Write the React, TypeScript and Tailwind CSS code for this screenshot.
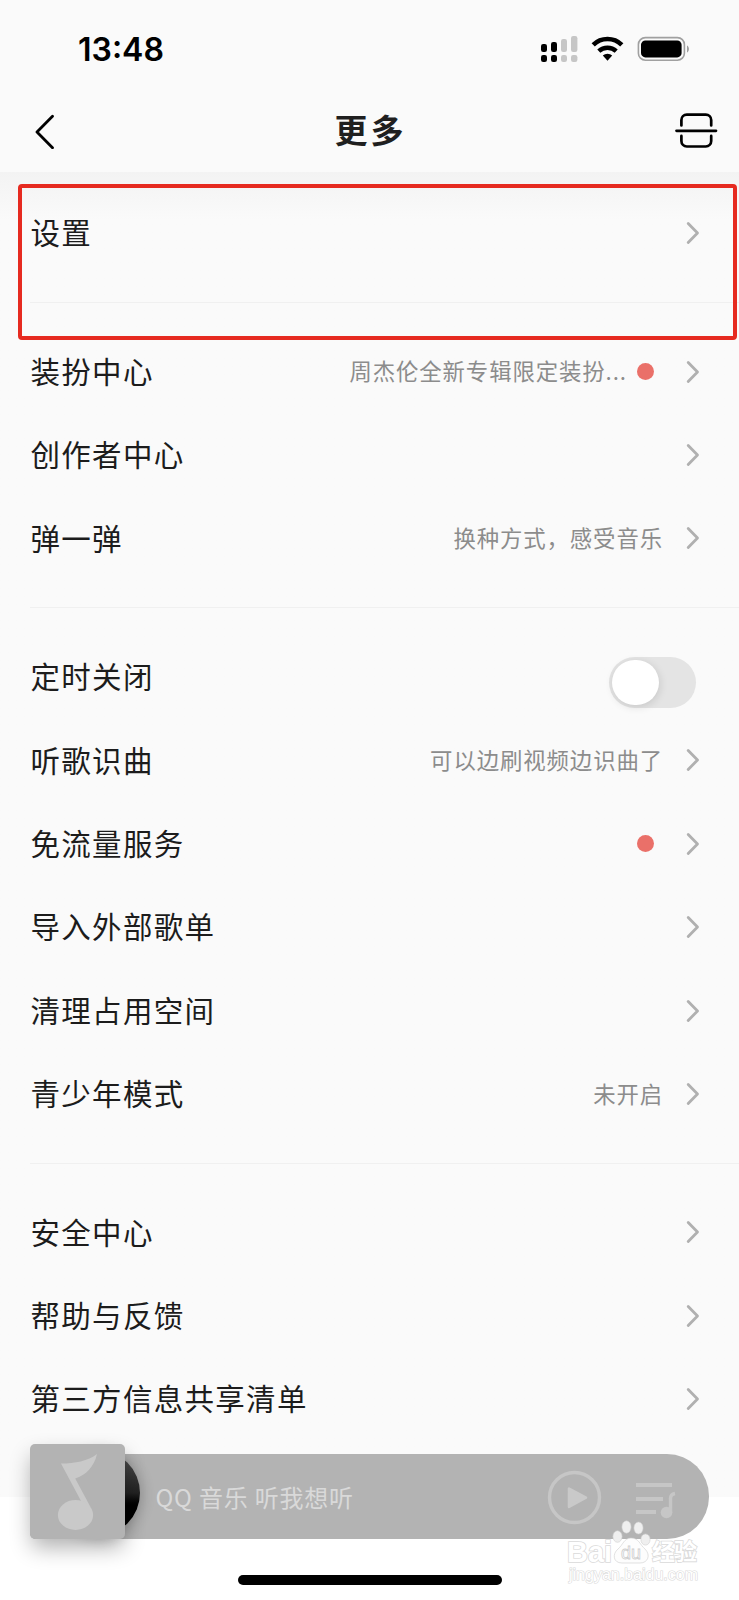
import { ReactNode } from "react";

type TItem = {
  label: string;
  note?: string;
  dot?: boolean;
  toggle?: boolean;
};

const groups: TItem[][] = [
  [{ label: "设置" }],
  [
    { label: "装扮中心", note: "周杰伦全新专辑限定装扮...", dot: true },
    { label: "创作者中心" },
    { label: "弹一弹", note: "换种方式，感受音乐" },
  ],
  [
    { label: "定时关闭", toggle: true },
    { label: "听歌识曲", note: "可以边刷视频边识曲了" },
    { label: "免流量服务", dot: true },
    { label: "导入外部歌单" },
    { label: "清理占用空间" },
    { label: "青少年模式", note: "未开启" },
  ],
  [
    { label: "安全中心" },
    { label: "帮助与反馈" },
    { label: "第三方信息共享清单" },
  ],
];

const StatusBar = () => (
  <div className="flex h-[98px] items-center justify-between pl-[78px] pr-[50px]">
    <span className="pt-[2px] font-['Inter',sans-serif] text-[32px] font-semibold leading-none text-black">
      13:48
    </span>
    <svg width="149" height="30" viewBox="540 34 149 30" fill="none">
      <g fill="#000">
        <rect x="541" y="44" width="6" height="8" rx="2.2" />
        <rect x="551" y="42" width="6" height="10" rx="2.2" />
        <rect x="541" y="55" width="6" height="7" rx="2.2" />
        <rect x="551" y="55" width="6" height="7" rx="2.2" />
      </g>
      <g fill="#c6c6c6">
        <rect x="561" y="39" width="6" height="13" rx="2.2" />
        <rect x="571" y="36" width="6.4" height="16" rx="2.2" />
        <rect x="561" y="55" width="6" height="7" rx="2.2" />
        <rect x="571" y="55" width="6.4" height="7" rx="2.2" />
      </g>
      <path d="M593.2 44.8a20.5 20.5 0 0 1 28.6 0" stroke="#000" strokeWidth="4.6" />
      <path d="M598.8 51.2a12.6 12.6 0 0 1 17.4 0" stroke="#000" strokeWidth="4.4" />
      <path d="M602.8 55.6a6.8 6.8 0 0 1 9.4 0L607.5 60.8Z" fill="#000" />
      <rect x="638.4" y="37.6" width="46" height="22.6" rx="7" stroke="#a0a0a0" strokeWidth="1.6" />
      <rect x="641" y="40.4" width="40.6" height="17" rx="4.4" fill="#000" />
      <path d="M687 45.6c2.6 1.2 2.6 5.8 0 7Z" fill="#a0a0a0" />
    </svg>
  </div>
);

const TitleBar = () => (
  <div className="flex h-[66px] items-center justify-between pl-[34px] pr-[21px]">
    <svg width="43" height="36" viewBox="0 0 43 36" fill="none">
      <path d="M18.5 3.2 3 19 18.5 34.7" stroke="#000" strokeWidth="2.8" strokeLinecap="round" strokeLinejoin="round" />
    </svg>
    <h1 className="mr-[11px] -mt-[3px] text-[33px] font-bold leading-none tracking-[3px] text-[#1f1f1f]">更多</h1>
    <svg width="43" height="36" viewBox="675 112.5 43 36" fill="none" stroke="#000" strokeWidth="2.7" strokeLinecap="round">
      <path d="M681.4 125V119.6a5.4 5.4 0 0 1 5.4-5.4h19a5.4 5.4 0 0 1 5.4 5.4V125" />
      <path d="M676.5 130.3h39.5" />
      <path d="M681.4 135.4v5.2a5.4 5.4 0 0 0 5.4 5.4h19a5.4 5.4 0 0 0 5.4-5.4v-5.2" />
    </svg>
  </div>
);

const Arrow = () => (
  <svg width="14" height="24" viewBox="0 0 14 24" fill="none">
    <path d="M2.2 2.5 11.5 12 2.2 21.5" stroke="#b0b0b0" strokeWidth="2.8" strokeLinecap="round" strokeLinejoin="round" />
  </svg>
);

const Row = ({ item }: { item: TItem }) => (
  <li className="flex h-[83.4px] items-center justify-between pl-[30.5px] pr-[39px]">
    <span className="pb-[2px] text-[29.5px] leading-none tracking-[1.3px] text-[#1c1c1c]">{item.label}</span>
    {item.toggle ? (
      <span className="mr-[4px] mt-[11.5px] flex h-[51px] w-[87px] items-center rounded-full bg-[#e4e4e4] p-[3px]">
        <span className="h-[45px] w-[47px] rounded-full bg-white shadow-[1px_2px_8px_rgba(0,0,0,0.12)]" />
      </span>
    ) : (
      <span className="flex items-center">
        {item.note && (
          <span className="pb-[2px] text-[22.4px] leading-none tracking-[0.9px] text-[#8c8c8c]">{item.note}</span>
        )}
        {item.dot && <span className="ml-[10px] mr-[9px] size-[17px] rounded-full bg-[#ea7069]" />}
        <span className="ml-[23px]">
          <Arrow />
        </span>
      </span>
    )}
  </li>
);

const Divider = () => (
  <div className="flex h-[55.1px] items-center pl-[30px]">
    <div className="h-px w-full bg-[#f0f0f0]" />
  </div>
);

const Group = ({ children }: { children: ReactNode }) => <ul>{children}</ul>;

const Player = () => (
  <div className="flex h-[95px] w-[679px] items-end">
    <div className="relative flex h-[85px] w-full items-center rounded-l-[6px] rounded-r-[42px] bg-[#b3b3b3] pl-[125.5px] pr-[33px]">
      {/* vinyl behind the cover */}
      <div className="absolute left-[24px] top-[-4px] size-[86px] rounded-full bg-linear-to-b from-[#555] via-[#222] to-black to-70% shadow-[2px_2px_14px_rgba(0,0,0,0.2)]" />
      <div className="absolute bottom-0 left-0 h-[95px] w-[95px] rounded-[5px] bg-[#b3b3b3] shadow-[0_10px_22px_-2px_rgba(0,0,0,0.32)]">
        <svg width="95" height="95" viewBox="30 1444 95 95" fill="#c9c9c9">
          <path d="M61 1463.6C75 1463.5 88 1461 97 1454C94 1467 86 1475 75.2 1478.5L90.5 1507L84 1506L80.5 1500Z" />
          <ellipse cx="75.5" cy="1515" rx="17.6" ry="15" />
        </svg>
      </div>
      <p className="grow text-[24px] leading-none tracking-[0.8px] text-[#d9d9d9]">QQ 音乐 听我想听</p>
      <svg width="130" height="56" viewBox="546 1468 130 56" fill="none">
        <circle cx="574.5" cy="1496.5" r="25" stroke="#c6c6c6" strokeWidth="3.4" />
        <path d="M569 1487.5v18.5l17-9.3Z" fill="#c9c9c9" stroke="#c9c9c9" strokeWidth="2.5" strokeLinejoin="round" />
        <g stroke="#c6c6c6" strokeWidth="4">
          <path d="M636 1484h36M636 1498h27M636 1511h20" />
          <path d="M670.5 1512v-14.5c0-3 1.5-4.5 4.5-5" strokeWidth="3.4" />
        </g>
        <circle cx="666.5" cy="1511.5" r="5.8" fill="#c6c6c6" />
      </svg>
    </div>
  </div>
);

const Watermark = () => (
  <svg className="absolute left-[560px] top-[1515px]" width="150" height="75" viewBox="560 1515 150 75">
    <g fill="#fff" stroke="#dadada" strokeWidth="1.6" paintOrder="stroke">
      <text x="567" y="1561.5" fontSize="29" fontWeight="700" fontFamily="Liberation Sans, sans-serif" textLength="45" lengthAdjust="spacingAndGlyphs">Bai</text>
      <text x="652" y="1559.5" fontSize="23" fontWeight="700" fontFamily="Noto Sans CJK SC, sans-serif" textLength="45">经验</text>
      <text x="569" y="1579.5" fontSize="16.5" strokeWidth="1.2" fontFamily="Liberation Sans, sans-serif" textLength="129" lengthAdjust="spacingAndGlyphs">jingyan.baidu.com</text>
    </g>
    <g fill="#efefef" stroke="#cfcfcf" strokeWidth="0.6">
      <ellipse cx="617.5" cy="1536.5" rx="4.6" ry="5.8" />
      <ellipse cx="626.5" cy="1527" rx="4.6" ry="6.2" />
      <ellipse cx="638.5" cy="1528" rx="4.6" ry="6" />
      <ellipse cx="645.5" cy="1539.5" rx="4.6" ry="5.6" />
      <path fill="#fdfdfd" d="M631 1538c8 0 9 7 14 11c6 6 3 14-5 14h-18c-9 0-10-9-4-14c5-4 6-11 13-11Z" />
    </g>
    <text x="621" y="1559" fontSize="18" fontFamily="Liberation Sans, sans-serif" fill="#fff" stroke="#cfcfcf" strokeWidth="0.8">du</text>
  </svg>
);

const App = () => {
  return (
    <div className="relative flex h-[1600px] w-[739px] flex-col overflow-hidden bg-[#fafafa] font-['Noto_Sans_CJK_SC',sans-serif]">
      <header className="h-[172px]">
        <StatusBar />
        <TitleBar />
      </header>
      <main className="h-[1272px] bg-linear-to-b from-[#f3f3f3] to-[#fafafa] to-[48px] pt-[19.5px]">
        {groups.map((group, index) => (
          <Group key={index}>
            {index > 0 && <Divider />}
            {group.map((item) => (
              <Row key={item.label} item={item} />
            ))}
          </Group>
        ))}
      </main>
      <footer className="flex grow flex-col bg-linear-to-b from-[#fafafa] from-[53px] to-white to-[53px] pl-[30px]">
        <Player />
        <div className="ml-[208px] mt-[36px] h-[10px] w-[264px] rounded-full bg-black" />
      </footer>

      {/* highlighted entry */}
      <div className="absolute left-[18px] top-[184px] h-[156px] w-[719px] rounded-[4px] border-4 border-[#e62a20]" />
      <Watermark />
    </div>
  );
};

export default App;
